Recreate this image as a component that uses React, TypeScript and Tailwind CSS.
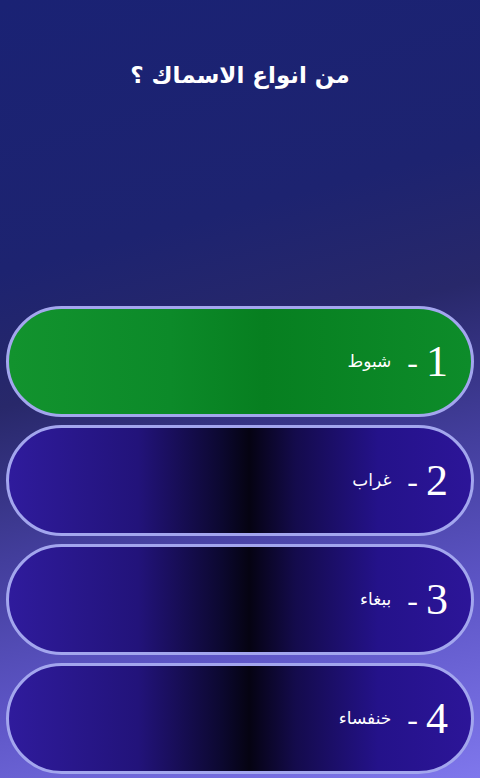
const answers = [
  { n: '1', text: 'شبوط', correct: true },
  { n: '2', text: 'غراب', correct: false },
  { n: '3', text: 'ببغاء', correct: false },
  { n: '4', text: 'خنفساء', correct: false },
]

function AnswerButton({ n, text, correct }: { n: string; text: string; correct: boolean }) {
  return (
    <div
      dir="rtl"
      className={
        correct
          ? 'h-[111px] rounded-full border-[3px] border-[#a3a6ee] bg-[linear-gradient(90deg,#12932e_0%,#0c8a29_35%,#077f20_55%,#0d8c2a_100%)] flex items-center pr-[23px]'
          : 'h-[111px] rounded-full border-[3px] border-[#a3a6ee] bg-[linear-gradient(90deg,#2f1b9c_0%,#22137a_28%,#0c0830_46%,#050312_52%,#140b4c_62%,#24128a_80%,#2c1598_100%)] flex items-center pr-[23px]'
      }
    >
      <span className="font-['Liberation_Serif',serif] text-[44px] leading-none text-white">{n}</span>
      <span className="mr-[8px] font-['Liberation_Serif',serif] text-[32px] leading-none text-white">-</span>
      <span className="mr-[16px] font-['DejaVu_Sans',sans-serif] text-[17px] text-white">{text}</span>
    </div>
  )
}

export default function App() {
  return (
    <div className="flex h-[778px] w-[480px] flex-col overflow-hidden bg-[linear-gradient(165deg,#1a2274_0%,#1d2370_30%,#28286a_45%,#433e9c_62%,#5c54c4_78%,#7f77ec_100%)]">
      <h1
        dir="rtl"
        className="pt-[58px] text-center font-['DejaVu_Sans',sans-serif] text-[23px] font-bold text-white"
      >
        من انواع الاسماك ؟
      </h1>
      <div className="mt-auto mb-[4px] flex flex-col gap-[8px] px-[6px]">
        {answers.map((a) => (
          <AnswerButton key={a.n} {...a} />
        ))}
      </div>
    </div>
  )
}
